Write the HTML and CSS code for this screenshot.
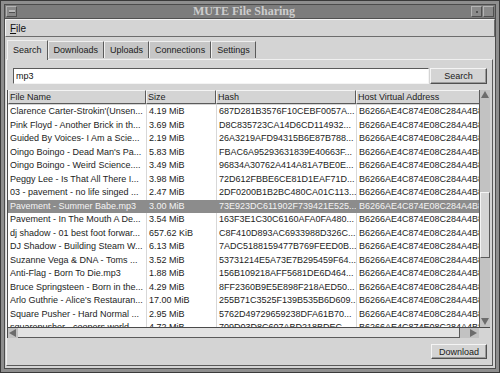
FILE: index.html
```html
<!DOCTYPE html>
<html lang="en">
<head>
  <meta charset="UTF-8" />
  <title>MUTE File Sharing</title>
  <link rel="stylesheet" href="styles.css">
</head>
<body>

<div class="frame">
  <div class="window">

    <div class="titlebar">
      <span class="tb-btn tb-menu"><span class="dash"></span></span>
      <span class="title">MUTE File Sharing</span>
      <span class="tb-btn tb-min"><span class="dot"></span></span>
      <span class="tb-btn tb-max"></span>
    </div>

    <div class="menubar">
      <span class="menu"><u>F</u>ile</span>
    </div>

    <div class="client">
      <div class="tabs">
        <div class="tab active">Search</div>
        <div class="tab">Downloads</div>
        <div class="tab">Uploads</div>
        <div class="tab">Connections</div>
        <div class="tab">Settings</div>
      </div>

      <div class="panel">
        <div class="search-row">
          <input type="text" class="search-input" value="mp3" />
          <button class="btn search-btn">Search</button>
        </div>

        <div class="list">
          <div class="list-top">
            <div class="list-main">
              <div class="row header">
                <div class="cell c-name">File Name</div>
                <div class="cell c-size">Size</div>
                <div class="cell c-hash">Hash</div>
                <div class="cell c-host">Host Virtual Address</div>
              </div>
              <div class="rows" id="rows"></div>
            </div>
            <div class="vscroll">
              <div class="arrow up"></div>
              <div class="v-track">
                <div class="v-gap top"></div>
                <div class="v-thumb"></div>
                <div class="v-gap"></div>
              </div>
              <div class="arrow down"></div>
            </div>
          </div>
          <div class="hscroll">
            <div class="arrow left"></div>
            <div class="h-thumb"></div>
            <div class="h-gap"></div>
            <div class="arrow right"></div>
            <div class="corner"></div>
          </div>
        </div>

        <div class="bottom-row">
          <button class="btn download-btn">Download</button>
        </div>
      </div>
    </div>

  </div>
</div>

<script>
  const host = "B6266AE4C874E08C284A4B89";
  const results = [
    ["Clarence Carter-Strokin'(Unsen...", "4.19 MiB", "687D281B3576F10CEBF0057A..."],
    ["Pink Floyd - Another Brick in th...", "3.69 MiB", "D8C835723CA14D6CD114932..."],
    ["Guided By Voices- I Am a Scie...", "2.19 MiB", "26A3219AFD94315B6E87B788..."],
    ["Oingo Boingo - Dead Man's Pa...", "5.83 MiB", "FBAC6A95293631839E40663F..."],
    ["Oingo Boingo - Weird Science....", "3.49 MiB", "96834A30762A414A81A7BE0E..."],
    ["Peggy Lee - Is That All There I...", "3.98 MiB", "72D612FBBE6CE81D1EAF71D..."],
    ["03 - pavement - no life singed ...", "2.47 MiB", "2DF0200B1B2BC480CA01C113..."],
    ["Pavement - Summer Babe.mp3", "3.00 MiB", "73E923DC611902F739421E525..."],
    ["Pavement - In The Mouth A De...", "3.54 MiB", "163F3E1C30C6160AFA0FA480..."],
    ["dj shadow - 01 best foot forwar...", "657.62 KiB", "C8F410D893AC6933988D326C..."],
    ["DJ Shadow - Building Steam W...", "6.13 MiB", "7ADC5188159477B769FEED0B..."],
    ["Suzanne Vega & DNA - Toms ...", "3.52 MiB", "53731214E5A73E7B295459F64..."],
    ["Anti-Flag - Born To Die.mp3", "1.88 MiB", "156B109218AFF5681DE6D464..."],
    ["Bruce Springsteen - Born in the...", "4.29 MiB", "8FF2360B9E5E898F218AED50..."],
    ["Arlo Guthrie - Alice's Restauran...", "17.00 MiB", "255B71C3525F139B535B6D609..."],
    ["Square Pusher - Hard Normal ...", "2.95 MiB", "5762D49729659238DFA61B70..."],
    ["squarepusher - coopers world...", "4.72 MiB", "709D03D8C607ABD218BDEC..."]
  ];

  function showResults() {
    const list = document.getElementById("rows");
    list.innerHTML = results.map((r, i) => `
      <div class="row${i === 7 ? ' selected' : ''}">
        <div class="cell c-name">${r[0].replace(/&/g, '&amp;')}</div>
        <div class="cell c-size">${r[1]}</div>
        <div class="cell c-hash">${r[2]}</div>
        <div class="cell c-host">${host}</div>
      </div>
    `).join('');
  }

  showResults();
</script>

</body>
</html>
```

FILE: styles.css
```css
body {
  margin: 0;
  padding: 0;
  font-family: "Liberation Sans", Arial, sans-serif;
  font-size: 9px;
  color: #1c1c1c;
}

.frame {
  width: 500px;
  height: 373px;
  box-sizing: border-box;
  border: 1px solid #3a3a3a;
  background: #8e8e8e;
  padding: 3px;
}

.window {
  height: 100%;
  box-sizing: border-box;
  border: 1px solid #4c4c4c;
  background: #d4d4d4;
  display: flex;
  flex-direction: column;
}

/* title bar */
.titlebar {
  height: 13px;
  background: #7c7c7c;
  border-bottom: 1px solid #505050;
  display: flex;
  align-items: center;
  padding: 0 1px;
}

.title {
  flex: 1;
  text-align: center;
  font-family: "Liberation Serif", "Times New Roman", serif;
  font-weight: bold;
  font-size: 12px;
  color: #cdcdcd;
}

.tb-btn {
  width: 9px;
  height: 9px;
  background: #8a8a8a;
  border: 1px solid;
  border-color: #b4b4b4 #505050 #505050 #b4b4b4;
  display: flex;
  align-items: center;
  justify-content: center;
}

.tb-btn.tb-max {
  margin-left: 1px;
}

.dash {
  width: 6px;
  height: 2px;
  background: #b8b8b8;
  border-bottom: 1px solid #505050;
}

.dot {
  width: 2px;
  height: 2px;
  background: #505050;
}

/* menu */
.menubar {
  height: 16px;
  border: 1px solid;
  border-color: #f2f2f2 #6c6c6c #6c6c6c #f2f2f2;
  display: flex;
  align-items: center;
  padding-left: 4px;
}

.menu {
  font-size: 10px;
  color: #111;
}

/* notebook */
.client {
  flex: 1;
  display: flex;
  flex-direction: column;
  padding: 2px 2px 2px 1px;
}

.tabs {
  display: flex;
  align-items: flex-end;
  height: 20px;
  padding-left: 1px;
}

.tab {
  height: 16px;
  line-height: 16px;
  padding: 0 5px;
  background: #c6c6c6;
  border: 1px solid;
  border-color: #f0f0f0 #5a5a5a transparent #f0f0f0;
  border-bottom: none;
  margin-bottom: 1px;
  color: #1a1a1a;
}

.tab.active {
  height: 19px;
  line-height: 19px;
  background: #d4d4d4;
  margin-bottom: -1px;
  position: relative;
  z-index: 1;
}

.panel {
  flex: 1;
  border: 1px solid;
  border-color: #f0f0f0 #5a5a5a #5a5a5a #f0f0f0;
  display: flex;
  flex-direction: column;
}

.search-row {
  display: flex;
  align-items: center;
  padding: 7px 5px 0 6px;
  height: 17px;
}

.search-input {
  flex: 1;
  height: 16px;
  box-sizing: border-box;
  border: 1px solid;
  border-color: #5a5a5a #f4f4f4 #f4f4f4 #5a5a5a;
  background: #ffffff;
  font-family: "Liberation Sans", Arial, sans-serif;
  font-size: 9px;
  padding: 0 2px;
  margin: 0;
  outline: none;
  color: #111;
}

.btn {
  font-family: "Liberation Sans", Arial, sans-serif;
  font-size: 9px;
  color: #1a1a1a;
  background: #d4d4d4;
  border: 1px solid;
  border-color: #f4f4f4 #505050 #505050 #f4f4f4;
  box-shadow: inset -1px -1px 0 #9a9a9a;
  padding: 0;
  margin: 0;
}

.search-btn {
  width: 57px;
  height: 16px;
  margin-left: 1px;
}

/* list */
.list {
  margin: 6px 2px 0 0;
  display: flex;
  flex-direction: column;
}

.list-top {
  display: flex;
}

.list-main {
  width: 474px;
  overflow: hidden;
  border-left: 1px solid #4a4a4a;
}

.row {
  display: flex;
  height: 13.5px;
  line-height: 13.5px;
  background: #ffffff;
  white-space: nowrap;
}

.row.header {
  height: 14px;
  line-height: 14px;
  background: #d4d4d4;
  margin-bottom: 1px;
}

.header .cell {
  border: 1px solid;
  border-color: #f4f4f4 #5a5a5a #5a5a5a #f4f4f4;
  padding-left: 1px;
  line-height: 12px;
}

.rows {
  height: 222px;
  overflow: hidden;
}

.cell {
  box-sizing: border-box;
  overflow: hidden;
  padding-left: 2px;
  flex-shrink: 0;
}

.rows .cell + .cell {
  border-left: 1px solid #d8d8d8;
}

.c-name { width: 138px; }
.c-size { width: 70px; }
.c-hash { width: 140px; }
.c-host { width: 140px; }

.row.selected {
  background: #8c8c8c;
  color: #f4f4f4;
}

.row.selected .cell + .cell {
  border-left-color: #8c8c8c;
}

/* scrollbars */
.vscroll {
  width: 10px;
  display: flex;
  flex-direction: column;
  background: #c2c2c2;
  border-left: 1px solid #5a5a5a;
}

.v-track {
  flex: 1;
  display: flex;
  flex-direction: column;
}

.v-gap {
  flex: 1;
}

.v-gap.top {
  flex: 0 0 92px;
}

.v-thumb {
  height: 64px;
  background: #d4d4d4;
  border: 1px solid;
  border-color: #f4f4f4 #5a5a5a #5a5a5a #f4f4f4;
}

.arrow {
  width: 10px;
  height: 10px;
  flex-shrink: 0;
  position: relative;
}

.arrow::before {
  content: "";
  position: absolute;
  left: 1px;
  top: 1px;
  width: 0;
  height: 0;
  border: 4px solid transparent;
}

.arrow.up::before {
  border-bottom: 7px solid #6c6c6c;
  border-top: none;
}

.arrow.down::before {
  border-top: 7px solid #6c6c6c;
  border-bottom: none;
}

.arrow.left::before {
  border-right: 7px solid #6c6c6c;
  border-left: none;
}

.arrow.right::before {
  border-left: 7px solid #6c6c6c;
  border-right: none;
}

.hscroll {
  display: flex;
  height: 10px;
  border-top: 1px solid #4a4a4a;
  border-left: 1px solid #4a4a4a;
  background: #c2c2c2;
}

.h-thumb {
  width: 442px;
  background: #e2e2e2;
  border-bottom: 1px solid #5a5a5a;
  border-right: 1px solid #5a5a5a;
  box-sizing: border-box;
}

.h-gap {
  flex: 1;
}

.corner {
  width: 11px;
  background: #d4d4d4;
}

.bottom-row {
  display: flex;
  justify-content: flex-end;
  padding: 6px 5px 0 0;
}

.download-btn {
  width: 56px;
  height: 15px;
}
```
